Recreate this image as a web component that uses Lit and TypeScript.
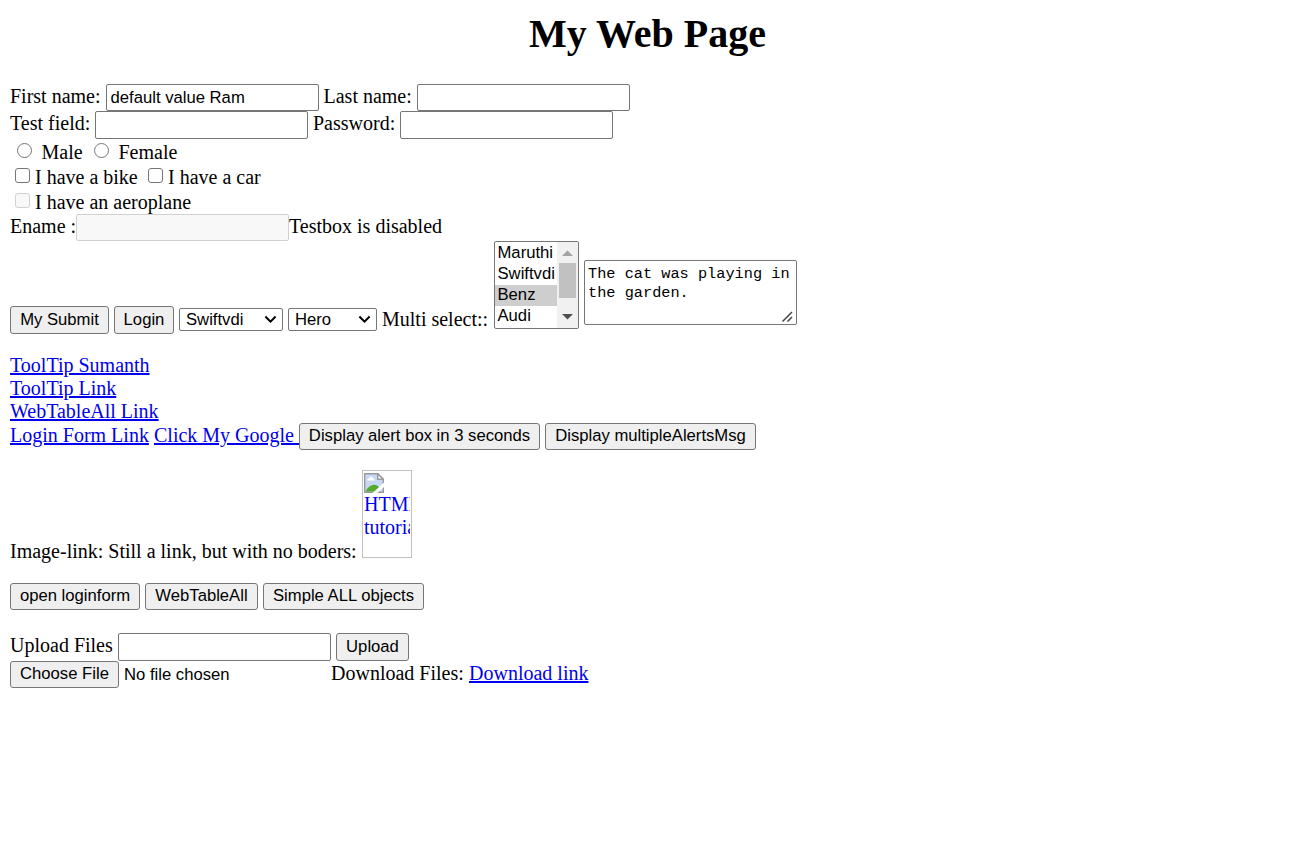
import { LitElement, html, css } from "lit";
import { customElement } from "lit/decorators.js";

@customElement("app-root")
export class AppRoot extends LitElement {
  static styles = css`
    :host {
      display: block;
      box-sizing: border-box;
      height: 842px;
      padding: 11px 10px 0;
      overflow: hidden;
      background: #fff;
      color: #000;
      font: 20px/23px "Liberation Serif", "Times New Roman", serif;
    }
    * { box-sizing: border-box; }
    h1 { margin: 0 0 27px; font-size: 40px; line-height: 46px; text-align: center; }
    .row { display: grid; align-items: start; justify-content: start; white-space: pre; }
    .row > span, .row > a, .row > label { margin-top: 1px; }
    a { color: #0000ee; text-decoration: underline; text-decoration-thickness: 2px; text-underline-offset: 1px; justify-self: start; }
    input, button, .select, .list, .file {
      font: 16.667px/19px "Liberation Sans", Arial, sans-serif;
      color: #000;
    }
    input.text {
      appearance: none; width: 213px; height: 27px; margin: 0; padding: 1px 3.5px;
      border: 1px solid #767676; border-radius: 2px; background: #fff; outline: 0;
    }
    input.text.tall { height: 28px; }
    input.text:disabled { border-color: #d1d1d1; background: #f8f8f8; }
    button {
      appearance: none; height: 27px; margin: 0; padding: 0 0 2px; white-space: nowrap;
      border: 1px solid #767676; border-radius: 3px; background: #efefef;
    }
    button.tall { height: 28px; padding-bottom: 1px; }
    .names { grid-template-columns: 96px 217.5px 93.5px 213px; height: 27px; }
    .fields { grid-template-columns: 85px 218px 87px 213px; height: 28px; }
    .gender { grid-template-columns: 31.5px 45.5px 31.5px 80px; height: 25px; }
    .vehicles { grid-template-columns: 25px 108px 25px 120px; height: 25px; }
    .row.gender > label, .row.vehicles > label { margin-top: 2px; }
    .mark {
      appearance: none; width: 15px; height: 15px; margin: 4px 0 0 5px;
      border: 1px solid #767676; border-radius: 3px; background: #fff;
    }
    .mark.round { margin-left: 7px; border-radius: 50%; }
    .mark:disabled { border-color: #d1d1d1; background: #f8f8f8; }
    .ename { grid-template-columns: 66px 213px 200px; height: 27px; }
    .mixed { grid-template-columns: 99px 60px 104px 89px 107px 85px 213px; column-gap: 5px; align-items: end; height: 93px; }
    .row.mixed > span { margin: 0 0 3px 0; }
    .select {
      display: flex; align-items: center; justify-content: space-between; height: 23px; margin-bottom: 3px;
      padding: 0 5px 0 6px; border: 1px solid #767676; border-radius: 2px;
    }
    .list {
      display: grid; grid-template-columns: 62px 21px; height: 88px; margin-bottom: 5px;
      border: 1px solid #767676; border-radius: 2px; overflow: hidden;
    }
    .options { padding-top: 1px; }
    .option { height: 21px; padding: 0 0 0 2.5px; }
    .option.chosen { background: #cecece; }
    .bar { display: flex; flex-direction: column; align-items: center; background: #f1f1f1; }
    .thumb { width: 17px; height: 35px; background: #c1c1c1; }
    .note {
      display: flex; flex-direction: column; justify-content: space-between; height: 65px; margin-bottom: 9px;
      padding: 4px 2px 2px 3px; border: 1px solid #767676; border-radius: 2px;
      font: 15.27px/19px "Liberation Mono", monospace;
    }
    .note svg { align-self: flex-end; flex: none; }
    svg { display: block; }
    .links { grid-template-columns: auto; grid-auto-rows: 23px; margin-top: 20px; height: 69px; }
    .row.links > a { margin-top: 0; }
    .alerts { grid-template-columns: 144px 145px 246px 211px; height: 27px; }
    .alerts .delayed { width: 241px; }
    .image { grid-template-columns: 352px 50px; height: 88px; margin-top: 20px; }
    .row.image > span { margin-top: 70px; }
    .row.image > .broken {
      display: block; width: 50px; height: 88px; margin: 0; padding: 2px 1px; white-space: normal;
      border: 1px solid #c0c0c0; text-decoration: none;
    }
    .broken span { display: block; overflow: hidden; }
    .openers { grid-template-columns: 130px 113px 161px; column-gap: 5px; height: 27px; margin-top: 25px; }
    .upload { grid-template-columns: 108px 218px 73px; height: 28px; margin-top: 23px; }
    .download { grid-template-columns: 109px 212px 138px 120px; height: 27px; }
    .row.download > .file { margin: 4px 0 0 5px; }
  `;

  private chevron() {
    return html`<svg width="13" height="9" viewBox="0 0 13 9"><path d="M1.4 1.5 6.5 6.6 11.6 1.5" fill="none" stroke="#000" stroke-width="2"/></svg>`;
  }

  private field(value = "", tall = false) {
    return html`<input class="text ${tall ? "tall" : ""}" type="text" .value=${value}>`;
  }

  render() {
    return html`
      <h1>My Web Page</h1>
      <div class="row names"><span>First name:</span>${this.field("default value Ram")}<span>Last name:</span>${this.field()}</div>
      <div class="row fields"><span>Test field:</span>${this.field("", true)}<span>Password:</span>${this.field("", true)}</div>
      <div class="row gender">
        <input class="mark round" type="radio" name="sex"><label>Male</label>
        <input class="mark round" type="radio" name="sex"><label>Female</label>
      </div>
      <div class="row vehicles">
        <input class="mark" type="checkbox"><label>I have a bike</label>
        <input class="mark" type="checkbox"><label>I have a car</label>
      </div>
      <div class="row vehicles"><input class="mark" type="checkbox" disabled><label>I have an aeroplane</label></div>
      <div class="row ename"><span>Ename :</span><input class="text" type="text" disabled><span>Testbox is disabled</span></div>
      <div class="row mixed">
        <button class="tall">My Submit</button>
        <button class="tall">Login</button>
        <div class="select">Swiftvdi${this.chevron()}</div>
        <div class="select">Hero${this.chevron()}</div>
        <span>Multi select::</span>
        <div class="list">
          <div class="options">${["Maruthi", "Swiftvdi", "Benz", "Audi"].map(
            (name) => html`<div class="option ${name === "Benz" ? "chosen" : ""}">${name}</div>`
          )}</div>
          <div class="bar">
            <svg width="21" height="21" viewBox="0 0 21 21"><path d="M5 14h11l-5.5-5.5z" fill="#a3a3a3"/></svg>
            <div class="thumb"></div>
            <svg width="21" height="30" viewBox="0 0 21 30"><path d="M5 16h11l-5.5 5.5z" fill="#505050"/></svg>
          </div>
        </div>
        <div class="note"><div>The cat was playing in<br>the garden.</div><svg width="12" height="11" viewBox="0 0 12 11"><path d="M.5 10.500 10 1M5.500 10.500l4.500-4.500" fill="none" stroke="#444" stroke-width="1.5"/></svg></div>
      </div>
      <div class="row links"><a href="#">ToolTip Sumanth</a><a href="#">ToolTip Link</a><a href="#">WebTableAll Link</a></div>
      <div class="row alerts"><a href="#">Login Form Link</a><a href="#">Click My Google </a><button class="delayed">Display alert box in 3 seconds</button><button>Display multipleAlertsMsg</button></div>
      <div class="row image">
        <span>Image-link: Still a link, but with no boders:</span>
        <a class="broken" href="#">
          <svg width="20" height="20" viewBox="0 0 20 20">
            <path d="M.7.7h13l5.600 5.600v13H.7z" fill="#c8d8f4" stroke="#999" stroke-width="1.4"/>
            <path d="M13.700.7v5.600h5.600z" fill="#fff" stroke="#999" stroke-width="1.4"/>
            <path d="M3 7.500q0-2 2-2 1-3 3-1.500 2.500 1 2.500 3.500z" fill="#fff"/>
            <path d="M1.500 18.600q3.500-7 9-6.800 4 .5 5.500 3.500v3.300z" fill="#55aa30"/>
            <path d="M8.500 20 20 9.500v4.500l-6.500 6z" fill="#fff"/>
          </svg><span>HTML</span><span>tutorial</span></a>
      </div>
      <div class="row openers"><button>open loginform</button><button>WebTableAll</button><button>Simple ALL objects</button></div>
      <div class="row upload"><span>Upload Files</span>${this.field("", true)}<button class="tall">Upload</button></div>
      <div class="row download"><button>Choose File</button><span class="file">No file chosen</span><span>Download Files:</span><a href="#">Download link</a></div>
    `;
  }
}
